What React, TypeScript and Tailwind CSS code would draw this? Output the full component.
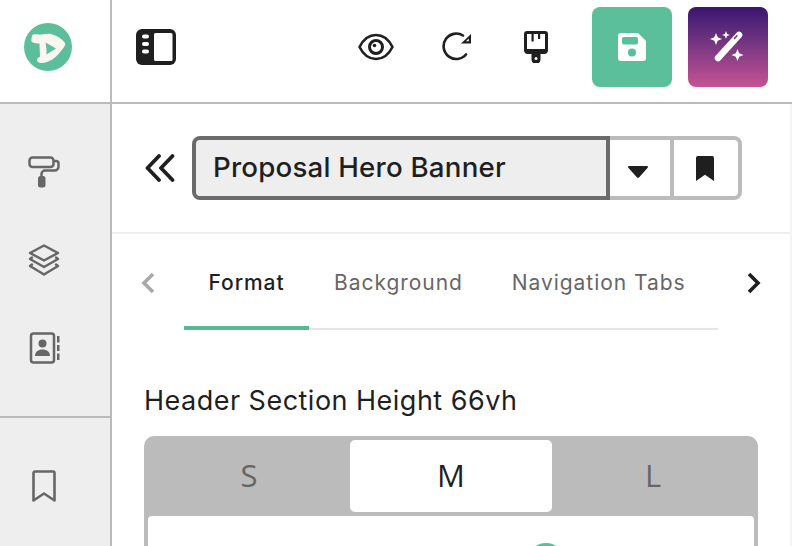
const ink = "#1f1f1f";
const gray = "#666666";

function Logo() {
  return (
    <svg width="48" height="48" viewBox="0 0 48 48">
      <circle cx="24" cy="24" r="24" fill="#5bbf9c" />
      <path d="M8 13c1-2.500 4-1.500 7-1.500 4 0 8-1.500 12-.5 6 1.500 11 5 14 9 .8 2-.5 3.500-2 5.500-3 4-6 8-10 10.500-3 2-8 4-11 4-3 0-5.500-1.500-5-3.500.3-1.500 2-2 3-3l-.5-13c-3 0-7-.5-8-2-.3-1.500 0-3 .5-5.500z" fill="#fbf6ef" />
      <path d="M21.500 19.500l10.500 6-9.500 6c.2-4 0-8-1-12z" fill="#5bbf9c" />
    </svg>
  );
}

function PanelIcon() {
  return (
    <svg width="40" height="36" viewBox="0 0 40 36">
      <path d="M6 0h28a6 6 0 0 1 6 6v24a6 6 0 0 1-6 6H6a6 6 0 0 1-6-6V6a6 6 0 0 1 6-6z" fill={ink} />
      <rect x="18" y="4" width="18.500" height="28" rx="1.500" fill="#fff" />
      <rect x="6" y="5.500" width="7" height="4" rx="2" fill="#fff" />
      <rect x="6" y="13" width="7" height="4" rx="2" fill="#fff" />
      <rect x="6" y="20.500" width="7" height="4" rx="2" fill="#fff" />
    </svg>
  );
}

function EyeIcon() {
  return (
    <svg width="36" height="28" viewBox="0 0 36 28" fill="none" stroke={ink} strokeWidth="2.600">
      <path d="M1.500 14C5.500 6 11 2 18 2s12.500 4 16.500 12C30.500 22 25 26 18 26S5.500 22 1.500 14z" strokeLinejoin="round" />
      <circle cx="18" cy="14" r="6.500" strokeWidth="3" />
      <circle cx="16.500" cy="12.500" r="1.800" fill={ink} stroke="none" />
    </svg>
  );
}

function RedoIcon() {
  return (
    <svg width="30" height="30" viewBox="0 0 30 30" fill="none">
      <path d="M21 3.500A12.700 12.700 0 1 0 24 22.500" stroke={ink} strokeWidth="2.600" strokeLinecap="round" />
      <path d="M29 2v9.500H19z" fill={ink} />
      <path d="M26.800 6.500v2.800h-2.800z" fill="#fff" />
    </svg>
  );
}

function BrushIcon() {
  return (
    <svg width="24" height="32" viewBox="0 0 24 32">
      <path d="M3 0h18a3 3 0 0 1 3 3v16a4 4 0 0 1-4 4h-3.500v5.500a4.500 4.500 0 0 1-9 0V23H4a4 4 0 0 1-4-4V3a3 3 0 0 1 3-3z" fill={ink} />
      <rect x="3" y="3" width="18" height="15" fill="#fff" />
      <rect x="7.500" y="3" width="2.200" height="7.500" fill={ink} />
      <rect x="14" y="3" width="2.200" height="5" fill={ink} />
      <circle cx="12" cy="27.500" r="1.500" fill="#fff" />
    </svg>
  );
}

function SaveIcon() {
  return (
    <svg width="28" height="28" viewBox="0 0 28 28">
      <path d="M3 0h17l8 8v17a3 3 0 0 1-3 3H3a3 3 0 0 1-3-3V3a3 3 0 0 1 3-3z" fill="#fff" />
      <rect x="4" y="4" width="16" height="7.500" rx="2" fill="#5bbf9c" />
      <circle cx="14" cy="19.500" r="4" fill="#5bbf9c" />
    </svg>
  );
}

function WandIcon() {
  return (
    <svg width="36" height="32" viewBox="0 0 36 32" fill="#fff">
      <path d="M6 2l1.700 4.300L12 8l-4.300 1.700L6 14 4.300 9.700 0 8l4.300-1.700z" />
      <path d="M16 0l1.100 2.900L20 4l-2.900 1.100L16 8l-1.100-2.900L12 4l2.900-1.100z" />
      <path d="M27.500 18l1.700 4.300 4.300 1.700-4.300 1.700-1.700 4.300-1.700-4.300-4.300-1.700 4.300-1.700z" />
      <path d="M8 27L29 4" stroke="#fff" strokeWidth="6.500" strokeLinecap="round" />
      <path d="M24.500 7.500l2.500-2.700" stroke="#7c2f7d" strokeWidth="1.500" strokeLinecap="round" />
    </svg>
  );
}

function RollerIcon() {
  return (
    <svg width="32" height="32" viewBox="0 0 32 32" fill="none" stroke={gray} strokeWidth="2.500">
      <rect x="1.500" y="1.500" width="24" height="9.500" rx="3" />
      <path d="M26 5h2a2.500 2.500 0 0 1 2.500 2.500v3a4 4 0 0 1-4 4H17a3.500 3.500 0 0 0-3.500 3.500v2" />
      <rect x="10" y="20" width="7.500" height="11.500" rx="2.500" fill={gray} stroke="none" />
    </svg>
  );
}

function LayersIcon() {
  return (
    <svg width="32" height="32" viewBox="0 0 32 32" fill="none" stroke={gray} strokeWidth="2.500" strokeLinejoin="round" strokeLinecap="round">
      <path d="M16 1.500l14 7.500-14 7.500L2 9z" />
      <path d="M4 13.500l-2 1.500 14 8 14-8-2-1.500" />
      <path d="M4 20.500l-2 1.500 14 8.500 14-8.500-2-1.500" />
    </svg>
  );
}

function ContactIcon() {
  return (
    <svg width="32" height="32" viewBox="0 0 32 32">
      <rect x="3" y="1.500" width="23" height="29" rx="2.500" fill="none" stroke={gray} strokeWidth="2.500" />
      <circle cx="14.500" cy="11.500" r="4" fill={gray} />
      <path d="M7 24c0-4 3-6.500 7.500-6.500S22 20 22 24z" fill={gray} />
      <rect x="29" y="4" width="2.500" height="6.500" fill={gray} />
      <rect x="29" y="13" width="2.500" height="6" fill={gray} />
      <rect x="29" y="21.500" width="2.500" height="6.500" fill={gray} />
    </svg>
  );
}

function BookmarkOutline() {
  return (
    <svg width="24" height="32" viewBox="0 0 24 32" fill="none" stroke={gray} strokeWidth="2.600" strokeLinejoin="round">
      <path d="M3 1.500h18a1.500 1.500 0 0 1 1.500 1.500v27.500L12 23.500 1.500 30.500V3A1.500 1.500 0 0 1 3 1.500z" />
    </svg>
  );
}

function BackIcon() {
  return (
    <svg width="30" height="28" viewBox="0 0 30 28" fill="none" stroke={ink} strokeWidth="3.800" strokeLinecap="round" strokeLinejoin="round">
      <path d="M14 2L2.500 14 14 26" />
      <path d="M27.500 2L16 14l11.500 12" />
    </svg>
  );
}

function Chevron({ dir, color }: { dir: "left" | "right"; color: string }) {
  return (
    <svg width="16" height="22" viewBox="0 0 16 22" fill="none" stroke={color} strokeWidth="3.600" strokeLinejoin="miter">
      <path d={dir === "left" ? "M13 2L4 11l9 9" : "M3 2l9 9-9 9"} />
    </svg>
  );
}

export default function App() {
  const tabs = ["Background", "Navigation Tabs"];

  return (
    <div className="flex h-[546px] w-[792px] flex-col overflow-hidden bg-white font-['Inter',sans-serif]">
      {/* Top bar */}
      <header className="flex h-[104px] shrink-0 border-b-2 border-[#bbbbbb]">
        <div className="flex w-[112px] shrink-0 items-center justify-center border-r-2 border-[#bbbbbb] pr-[14px] pb-[8px]">
          <Logo />
        </div>
        <div className="flex flex-1 items-start">
          <button className="mt-[29px] ml-[24px]">
            <PanelIcon />
          </button>
          <div className="mt-[33px] ml-[182px]">
            <EyeIcon />
          </div>
          <div className="mt-[32px] ml-[48px]">
            <RedoIcon />
          </div>
          <div className="mt-[31px] ml-[52px]">
            <BrushIcon />
          </div>
          <button className="mt-[7px] ml-[44px] flex h-[80px] w-[80px] items-center justify-center rounded-[8px] bg-[#5bbf9c]">
            <SaveIcon />
          </button>
          <button className="mt-[7px] ml-[16px] flex h-[80px] w-[80px] items-center justify-center rounded-[8px] bg-gradient-to-b from-[#3a1470] to-[#c75292]">
            <WandIcon />
          </button>
        </div>
      </header>

      <div className="flex min-h-0 flex-1">
        {/* Sidebar */}
        <aside className="flex w-[112px] shrink-0 flex-col border-r-2 border-[#bbbbbb] bg-[#eeeeee]">
          <div className="flex h-[314px] shrink-0 flex-col items-center gap-[56px] border-b-2 border-[#bbbbbb] pt-[52px] pr-[22px]">
            <RollerIcon />
            <LayersIcon />
            <ContactIcon />
          </div>
          <div className="flex justify-center pt-[52px] pr-[22px]">
            <BookmarkOutline />
          </div>
        </aside>

        {/* Panel */}
        <main className="min-w-0 flex-1 border-r-2 border-[#f4f4f4]">
          <div className="flex h-[130px] items-center border-b-2 border-[#eeeeee] pl-[33px]">
            <BackIcon />
            <div className="ml-[17px] flex h-[64px] w-[418px] items-center rounded-l-[8px] border-4 border-[#6b6b6b] bg-[#eeeeee] pl-[17px] text-[27.700px] leading-none font-medium tracking-[0.2px] whitespace-nowrap text-[#1f1f1f]">
              Proposal Hero Banner
            </div>
            <div className="flex h-[64px] w-[132px] rounded-r-[8px] border-y-4 border-r-4 border-[#bbbbbb]">
              <div className="flex w-[64px] items-center justify-center border-r-4 border-[#bbbbbb] pr-[4px]">
                <svg width="20" height="12" viewBox="0 0 20 12" className="mt-[8px]">
                  <path d="M1 0h18a1 1 0 0 1 .7 1.700l-8.500 9.500a1.600 1.600 0 0 1-2.400 0L.3 1.700A1 1 0 0 1 1 0z" fill={ink} />
                </svg>
              </div>
              <div className="flex flex-1 items-center justify-center pr-[2px]">
                <svg width="18" height="25" viewBox="0 0 20 26" preserveAspectRatio="none">
                  <path d="M2 0h16a2 2 0 0 1 2 2v24l-10-6.500L0 26V2a2 2 0 0 1 2-2z" fill={ink} />
                </svg>
              </div>
            </div>
          </div>

          {/* Tabs */}
          <div className="relative flex h-[96px] pl-[72px]">
            <div className="absolute top-[38px] left-[28px]">
              <Chevron dir="left" color="#a8a8a8" />
            </div>
            <div className="flex h-[96px] w-[534px] border-b-2 border-[#e4e3ee] text-[21px] tracking-[0.95px]">
              <div className="h-[96px] w-[125px] border-b-4 border-[#57b894] pt-[36px] text-center leading-[26px] font-medium text-[#1f1f1f]">
                Format
              </div>
              {tabs.map((t, i) => (
                <div key={t} className={`pt-[36px] leading-[26px] whitespace-nowrap text-[#666666] ${i === 0 ? "ml-[25px]" : "ml-[49px]"}`}>
                  {t}
                </div>
              ))}
            </div>
            <div className="absolute top-[38px] left-[634px]">
              <Chevron dir="right" color={ink} />
            </div>
          </div>

          {/* Height setting */}
          <section className="px-[32px] pt-[54px]">
            <h2 className="translate-y-[1px] text-[27px] leading-[32px] font-normal tracking-[0.48px] whitespace-nowrap text-[#1f1f1f]">
              Header Section Height 66vh
            </h2>
            <div className="mt-[20px] h-[200px] w-[614px] rounded-t-[10px] bg-[#bbbbbb] px-[4px] pt-[4px] font-['Open_Sans',sans-serif]">
              <div className="flex h-[72px] text-[31px] font-medium">
                <div className="flex w-[202px] items-center justify-center pb-[2px] text-[#666666]">S</div>
                <div className="flex w-[202px] items-center justify-center rounded-[5px] bg-white pb-[2px] text-[#1f1f1f]">M</div>
                <div className="flex flex-1 items-center justify-center pb-[2px] text-[#666666]">L</div>
              </div>
              <div className="relative mt-[4px] h-[120px] rounded-t-[4px] bg-white">
                <div className="absolute top-[27px] left-[380px] h-[36px] w-[36px] rounded-full bg-[#5bbf9c]" />
              </div>
            </div>
          </section>
        </main>
      </div>
    </div>
  );
}
